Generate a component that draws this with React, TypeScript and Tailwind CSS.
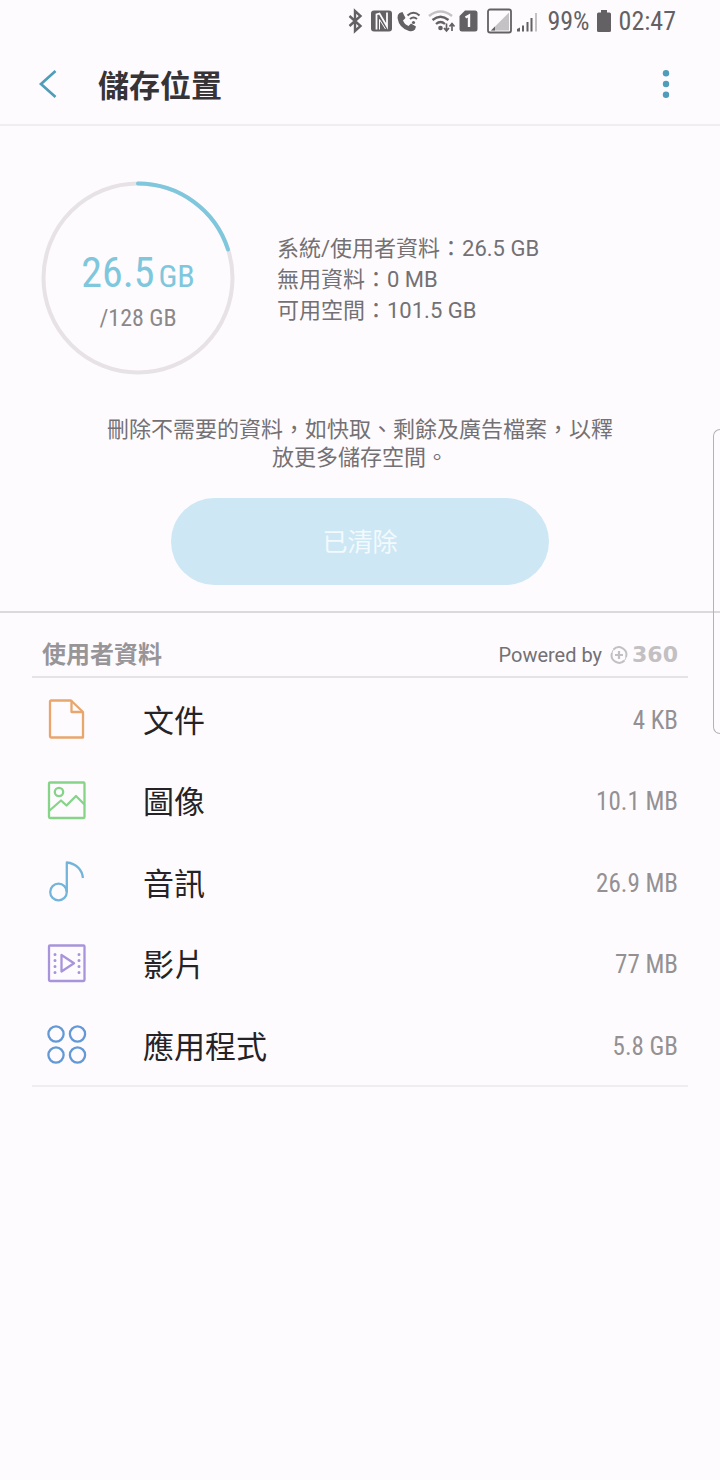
import type { ReactNode } from 'react';

const CONDENSED = "font-['Roboto_Condensed','Liberation_Sans_Narrow',Roboto,sans-serif]";

function StatusBar() {
  return (
    <div className="flex h-[42px] items-center justify-end pr-[44px] text-[#636163]">
      <svg width="190" height="30" viewBox="0 0 190 30" fill="none" aria-hidden="true" className="mr-[9px]">
        {/* bluetooth */}
        <path d="M1.500 9.500l11 10-5.500 5V4.500l5.500 5-11 10" transform="translate(0 .5)" stroke="currentColor" strokeWidth="2.400" />
        {/* nfc */}
        <rect x="23" y="4.500" width="21" height="21" rx="3" fill="currentColor" />
        <path d="M28.500 23.500V8.500l3-1 7.500 13V6.500" stroke="#fefbff" strokeWidth="1.800" />
        <path d="M31.500 23.500V13.500l6 9.500" stroke="#fefbff" strokeWidth="1" />
        {/* wifi calling */}
        <path d="M51.500 7l3-1 3 6-2.500 2.500q1.500 4 5.500 5.500l2.500-2.500 5 3-1 3q-2 2.500-6 1.500-10-3-11.500-13-.2-3.500 2-5z" fill="currentColor" />
        <path d="M59.500 9.500q6-5.500 12 0M62 13q3.500-3 7 0" stroke="currentColor" strokeWidth="2" />
        <circle cx="65.500" cy="16.500" r="1.600" fill="currentColor" />
        {/* wifi */}
        <path d="M81 10q11.500-9 23 0" stroke="#c4c2c4" strokeWidth="2.500" />
        <path d="M84.500 14q8-6.500 16 0M88 18q4.500-4 9 0" stroke="currentColor" strokeWidth="2.300" />
        <circle cx="92.500" cy="22" r="2.300" fill="currentColor" />
        <path d="M98.500 17.500v7M96 22l2.500 3 2.500-3M104 25v-7M101.500 20.500l2.500-3 2.500 3" stroke="currentColor" strokeWidth="1.700" />
        {/* sim one */}
        <path d="M117 4.500h10a2.500 2.500 0 0 1 2.500 2.500v16a2.500 2.500 0 0 1-2.500 2.500h-13a2.500 2.500 0 0 1-2.500-2.500V10z" fill="currentColor" />
        <path d="M117.500 11.500l3.500-2v11.500" stroke="#fefbff" strokeWidth="2.400" />
        {/* first signal */}
        <rect x="140" y="3.500" width="23" height="23" rx="2" stroke="currentColor" strokeWidth="1.800" />
        <path d="M161 6.500V24.500H143z" fill="#c4c2c4" />
        <path d="M147 20.500v4h-4z" fill="currentColor" />
        {/* second signal */}
        <path d="M169 25.500v-2.500l3-1.500v4zM174 19.500h2v6h-2zM178.500 16h2v9.500h-2zM182.500 12h2v13.500h-2z" fill="currentColor" />
        <path d="M187 7h2v18.500h-2z" fill="#c4c2c4" />
      </svg>
      <span className={`text-[26px] ${CONDENSED}`}>99%</span>
      <svg width="14" height="22" viewBox="0 0 14 22" fill="currentColor" aria-hidden="true" className="mr-2 ml-[7px]">
        <path d="M4 0h6v2.500h2.500A1.500 1.500 0 0 1 14 4v16.500a1.500 1.500 0 0 1-1.500 1.500h-11A1.500 1.500 0 0 1 0 20.500V4a1.500 1.500 0 0 1 1.500-1.500H4z" />
      </svg>
      <span className={`text-[26px] ${CONDENSED}`}>02:47</span>
    </div>
  );
}

function Header() {
  return (
    <header className="flex h-[84px] items-center border-b-2 border-[#f0edf1] pt-[2px] pr-[46px] pl-[34px]">
      <button type="button" aria-label="返回" className="flex h-12 w-[64px] items-center text-[#4f9db9]">
        <svg width="28" height="28" viewBox="0 0 28 28" fill="none" stroke="currentColor" strokeWidth="2.700">
          <path d="M21.500 1L7 14l14.500 13" />
        </svg>
      </button>
      <h1 className="pt-[6px] text-[31px] font-bold text-[#363436]">儲存位置</h1>
      <button type="button" aria-label="更多選項" className="ml-auto text-[#4f9db9]">
        <svg width="16" height="28" viewBox="0 0 16 28" fill="currentColor">
          <circle cx="8" cy="3.200" r="3.200" />
          <circle cx="8" cy="14" r="3.200" />
          <circle cx="8" cy="24.800" r="3.200" />
        </svg>
      </button>
    </header>
  );
}

function UsageRing() {
  return (
    <div className="grid size-[194px] shrink-0 place-items-center">
      <svg viewBox="0 0 194 194" fill="none" strokeWidth="4" className="col-start-1 row-start-1 size-full" aria-hidden="true">
        <circle cx="97" cy="97" r="94.500" stroke="#e6e2e6" />
        <path d="M97 2.500A94.500 94.500 0 0 1 187 68.500" stroke="#7fc7dc" strokeLinecap="round" />
      </svg>
      <div className={`col-start-1 row-start-1 pt-7 text-center ${CONDENSED}`}>
        <p className="flex items-baseline gap-1 text-[42px] leading-[48px] text-[#7fc7dc]">
          26.5<span className="text-[32px]">GB</span>
        </p>
        <p className="text-2xl leading-9 text-[#8a888a]">/128 GB</p>
      </div>
    </div>
  );
}

function IconFrame({ color, children }: { color: string; children: ReactNode }) {
  return (
    <svg width="42" height="42" viewBox="0 0 42 42" fill="none" stroke="currentColor" strokeWidth="2.300" strokeLinejoin="round" aria-hidden="true" className={color}>
      {children}
    </svg>
  );
}

const categories = [
  {
    name: '文件',
    size: '4 KB',
    icon: (
      <IconFrame color="text-[#e9a66c]">
        <path d="M6 2.500h20L38 14v25.500H6a1 1 0 0 1-1-1V3.500a1 1 0 0 1 1-1z" />
        <path d="M26.500 2.500v11.500H38" />
      </IconFrame>
    ),
  },
  {
    name: '圖像',
    size: '10.1 MB',
    icon: (
      <IconFrame color="text-[#86d488]">
        <rect x="4" y="3.500" width="35.500" height="35.500" rx="1" />
        <circle cx="14" cy="13" r="4.200" />
        <path d="M4 32l12-10.500 5.500 5L31 17l8.500 8.500" />
      </IconFrame>
    ),
  },
  {
    name: '音訊',
    size: '26.9 MB',
    icon: (
      <IconFrame color="text-[#73b5da]">
        <circle cx="13.500" cy="32" r="8.300" />
        <path d="M21.800 32V2.500C31 3.500 37 9.500 38 18" />
      </IconFrame>
    ),
  },
  {
    name: '影片',
    size: '77 MB',
    icon: (
      <IconFrame color="text-[#a794da]">
        <rect x="4" y="3.500" width="35.500" height="35.500" rx="1" />
        <path d="M16.500 13v16.500L29 21.300z" />
        <path d="M10 12.500v0M10 18.500v0M10 24.500v0M10 30.500v0M34 12.500v0M34 18.500v0M34 24.500v0M34 30.500v0" strokeWidth="3" strokeLinecap="round" />
      </IconFrame>
    ),
  },
  {
    name: '應用程式',
    size: '5.8 GB',
    icon: (
      <IconFrame color="text-[#6299d6]">
        <circle cx="11" cy="11" r="7.600" />
        <circle cx="32.500" cy="11" r="7.600" />
        <circle cx="11" cy="32" r="7.600" />
        <circle cx="32.500" cy="32" r="7.600" />
      </IconFrame>
    ),
  },
];

export default function App() {
  return (
    <div lang="zh-Hant" className="relative min-h-screen overflow-x-hidden bg-[#fefbff] font-[Roboto,'Noto_Sans_CJK_TC',sans-serif]">
      <StatusBar />
      <Header />
      <main>
        <section className="flex flex-col items-center px-[41px] pt-[55px] pb-[26px]">
          <div className="flex w-full items-center gap-[42px]">
            <UsageRing />
            <ul className="pt-[2px] text-[22px] leading-[31px] text-[#737173]">
              <li>系統/使用者資料：26.5 GB</li>
              <li>無用資料：0 MB</li>
              <li>可用空間：101.5 GB</li>
            </ul>
          </div>
          <p className="mt-[41px] max-w-[520px] text-center text-[22px] leading-7 text-[#737173]">
            刪除不需要的資料，如快取、剩餘及廣告檔案，以釋放更多儲存空間。
          </p>
          <button type="button" className="mt-[26px] h-[87px] w-full max-w-[378px] rounded-full bg-[#cde7f5] pt-[2px] text-[25px] text-[#f3fafd]">
            已清除
          </button>
        </section>
        <section className="border-t-2 border-[#dcd8dd] px-8">
          <div className="flex h-[65px] items-center justify-between border-b-2 border-[#e6e2e7] px-[10px] pt-5">
            <h2 className="text-2xl leading-[42px] font-bold text-[#979597]">使用者資料</h2>
            <p className="flex items-center text-xl text-[#737173]">
              Powered by
              <svg width="18" height="18" viewBox="0 0 18 18" fill="none" stroke="#c2c0c2" aria-hidden="true" className="mr-1 ml-2">
                <path d="M3.500 3.500A7.500 7.500 0 0 1 16 11M14.500 14.500A7.500 7.500 0 0 1 2 7" strokeWidth="2" />
                <path d="M2 7a7.500 7.500 0 0 1 1.500-3.500M16 11a7.500 7.500 0 0 1-1.500 3.500" strokeWidth="1" />
                <path d="M9 5v8M5 9h8" strokeWidth="2.200" />
              </svg>
              <span className="font-['DejaVu_Sans',sans-serif] text-[22px] leading-7 font-bold text-[#c2c0c2]">360</span>
            </p>
          </div>
          <ul className="grid min-h-[409px] auto-rows-fr border-b-2 border-[#f0edf1]">
            {categories.map(({ name, size, icon }) => (
              <li key={name} className="grid">
                <button type="button" className="flex items-center pr-[10px] pl-[13px] text-left">
                  {icon}
                  <span className="ml-[56px] pt-[7px] text-[31px] text-[#252325]">{name}</span>
                  <span className={`ml-auto pt-1 text-[25px] text-[#939193] ${CONDENSED}`}>{size}</span>
                </button>
              </li>
            ))}
          </ul>
        </section>
      </main>
      <div className="absolute top-[429px] right-0 h-[305px] w-[7px] rounded-l-lg border border-r-0 border-[#b5b2b6]" aria-hidden="true" />
    </div>
  );
}
